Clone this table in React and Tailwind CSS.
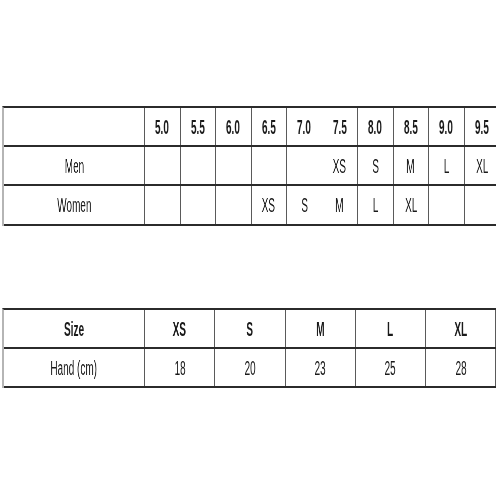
function T({ children, bold }) {
    return (
        <span
            className={`inline-block will-change-transform scale-x-[0.5] text-[20px] leading-none text-[#1a1a1a] whitespace-nowrap ${
                bold ? "font-bold" : ""
            }`}
        >
            {children}
        </span>
    );
}

function Cell({ w, children, bold, noLine }) {
    return (
        <div
            className={`${w} h-full shrink-0 flex items-center justify-center border-r ${
                noLine ? "border-transparent" : "border-[#5a5a5a]"
            }`}
        >
            {children && <T bold={bold}>{children}</T>}
        </div>
    );
}

const sizes = ["5.0", "5.5", "6.0", "6.5", "7.0", "7.5", "8.0", "8.5", "9.0", "9.5"];
const men = ["", "", "", "", "", "XS", "S", "M", "L", "XL"];
const women = ["", "", "", "XS", "S", "M", "L", "XL", "", ""];

const hand = [
    ["XS", "18"],
    ["S", "20"],
    ["M", "23"],
    ["L", "25"],
    ["XL", "28"],
];

function ShoeRow({ label, cells, bold, h }) {
    return (
        <div className={`flex ${h} border-b-2 border-[#2b2b2b]`}>
            <Cell w="w-[141px]">{label}</Cell>
            {cells.map((c, i) => (
                <Cell key={i} w="w-[35.5px]" bold={bold} noLine={i === 4}>
                    {c}
                </Cell>
            ))}
        </div>
    );
}

export default function App() {
    return (
        <div
            className="w-[496px] h-[496px] overflow-hidden bg-white"
            style={{ fontFamily: '"Liberation Sans", Arial, sans-serif' }}
        >
            <div className="pt-[106px] pl-[2px]">
                <div className="w-[498px] border-t-2 border-l-2 border-t-[#2b2b2b] border-l-[#b5b5b5]">
                    <ShoeRow label="" cells={sizes} bold h="h-[39px]" />
                    <ShoeRow label="Men" cells={men} h="h-[39px]" />
                    <ShoeRow label="Women" cells={women} h="h-[40px]" />
                </div>
            </div>

            <div className="pt-[82px] pl-[2px]">
                <div className="w-[498px] border-t-2 border-l-2 border-t-[#2b2b2b] border-l-[#b5b5b5]">
                    <div className="flex h-[39px] border-b-2 border-[#2b2b2b]">
                        <Cell w="w-[141px]" bold>
                            Size
                        </Cell>
                        {hand.map(([s]) => (
                            <Cell key={s} w="w-[70.25px]" bold>
                                {s}
                            </Cell>
                        ))}
                    </div>
                    <div className="flex h-[39px] border-b-2 border-[#2b2b2b]">
                        <Cell w="w-[141px]">Hand (cm)</Cell>
                        {hand.map(([s, v]) => (
                            <Cell key={s} w="w-[70.25px]">
                                {v}
                            </Cell>
                        ))}
                    </div>
                </div>
            </div>
        </div>
    );
}
